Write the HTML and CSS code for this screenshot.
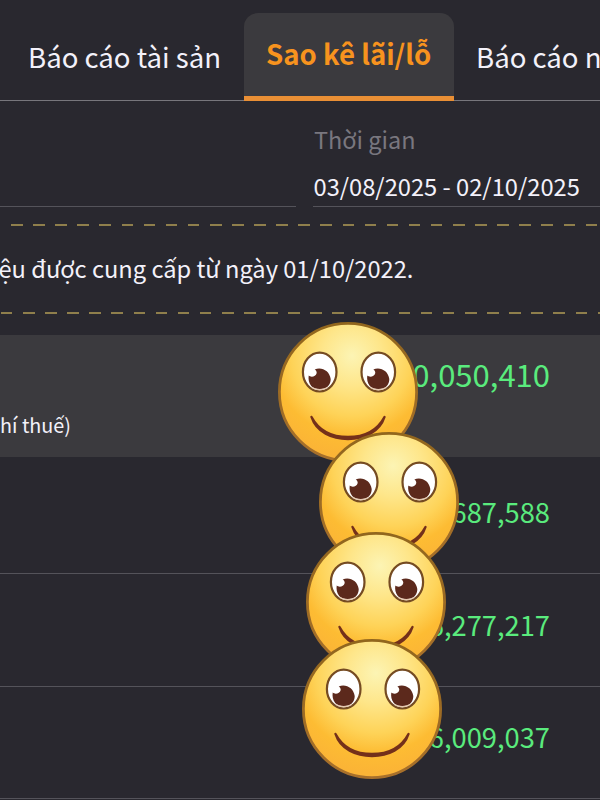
FILE: index.html
```html
<!DOCTYPE html>
<html lang="vi">
<head>
    <meta charset="utf-8">
    <title>Sao kê lãi/lỗ</title>
    <link rel="stylesheet" href="styles.css">
</head>
<body>
    <!-- Shared face drawing -->
    <svg class="defs" width="0" height="0">
        <defs>
            <radialGradient id="skin" gradientUnits="userSpaceOnUse" cx="74" cy="34" r="100">
                <stop offset="0" stop-color="#fcf4b4"/>
                <stop offset="0.3" stop-color="#fee68a"/>
                <stop offset="0.6" stop-color="#fed358"/>
                <stop offset="0.8" stop-color="#fdbc33"/>
                <stop offset="1" stop-color="#fbb436"/>
            </radialGradient>
            <linearGradient id="edge" x1="0" y1="0" x2="0" y2="1">
                <stop offset="0" stop-color="#91661d"/>
                <stop offset="1" stop-color="#a8702b"/>
            </linearGradient>
            <g id="eye">
                <ellipse rx="16.800" ry="19.400" fill="#fff" stroke="#754b22" stroke-width="2.200"/>
                <path d="M-11 3.500 C-9 5.500 -4 5 -3 1 C-3 -1 -4 -2 -5 -2.500 C2 -5.500 10 -1 11 7 C11 11 9 14.500 6 16 C2 18 -5 17.500 -8.500 14 C-11 11 -11.500 7 -11 3.500Z" fill="#5c291c"/>
                <path d="M-8 15.500 Q0 20 8 15.500" fill="none" stroke="#e5c9b0" stroke-width="1.300"/>
            </g>
            <symbol id="face" viewBox="0 0 140 140">
                <circle cx="70" cy="70" r="68.600" fill="url(#skin)" stroke="url(#edge)" stroke-width="2.800"/>
                <use href="#eye" x="41.700" y="50"/>
                <use href="#eye" x="100.300" y="50"/>
                <path d="M33.500 95 C41 109 54 115 70 115 C86 115 99 109 106.500 95 C101.500 110.500 86 117 70 117 C54 117 38.500 110.500 33.500 95Z" fill="#74301a" stroke="#74301a" stroke-width="2.400" stroke-linejoin="round"/>
            </symbol>
        </defs>
    </svg>

    <nav class="tabs">
        <div class="tab">Báo cáo tài sản</div>
        <div class="tab active">Sao kê lãi/lỗ</div>
        <div class="tab">Báo cáo n</div>
    </nav>

    <div class="filters">
        <div class="field"></div>
        <div class="field">
            <div class="label">Thời gian</div>
            <div class="date">03/08/2025 - 02/10/2025</div>
        </div>
    </div>

    <div class="notice">ệu được cung cấp từ ngày 01/10/2022.</div>

    <div class="report">
        <div class="total">
            <div class="amount big">0,050,410</div>
            <div class="caption">hí thuế)</div>
        </div>
        <div class="row"><div class="amount">687,588</div></div>
        <div class="row"><div class="amount">6,277,217</div></div>
        <div class="row"><div class="amount">6,009,037</div></div>

        <svg class="sticker first"><use href="#face"/></svg>
        <svg class="sticker second"><use href="#face"/></svg>
        <svg class="sticker third"><use href="#face"/></svg>
        <svg class="sticker fourth"><use href="#face"/></svg>
    </div>
</body>
</html>
```

FILE: styles.css
```css
:root {
    --bg: #29282f;
    --panel: #3b3a3e;
    --line: #54535a;
    --dash: #8f7f4c;
    --orange: #f7931e;
    --green: #5aeb7d;
}

* {
    box-sizing: border-box;
}

body {
    margin: 0;
    width: 600px;
    height: 800px;
    overflow: hidden;
    background: var(--bg);
    color: #f3f1fa;
    font-family: "Noto Sans CJK SC", "Noto Sans", sans-serif;
    white-space: nowrap;
}

.defs {
    display: block;
}

.tabs {
    display: flex;
    height: 101px;
    padding-top: 13px;
    border-bottom: 1px solid #77767c;
}

.tab {
    flex: none;
    height: 88px;
    padding-left: 28px;
    width: 244px;
    font-size: 27.6px;
    line-height: 86px;
}

.tab.active {
    width: 210px;
    padding: 0 0 0 22px;
    background: var(--panel);
    border-bottom: 5px solid #e98f35;
    border-radius: 14px 14px 0 0;
    color: var(--orange);
    font-size: 27.6px;
    font-weight: 700;
    line-height: 81px;
}

.tab:last-child {
    flex: 1;
    width: auto;
    min-width: 0;
    padding-left: 22px;
}

.filters {
    display: flex;
    gap: 17px;
    height: 106px;
}

.field {
    width: 296px;
    padding-top: 15px;
    border-bottom: 1px solid var(--line);
    flex: none;
}

.field:last-child {
    flex: 1;
}

.label {
    padding-left: 1px;
    font-size: 23.5px;
    line-height: 46px;
    color: #79777f;
}

.date {
    padding-left: 0.5px;
    font-size: 23.7px;
    line-height: 48px;
}

.notice {
    margin-top: 17px;
    height: 90px;
    font-size: 23.65px;
    line-height: 88px;
    text-indent: -1.5px;
    background:
        repeating-linear-gradient(90deg, var(--dash) 0 11.5px, transparent 11.5px 22.1px) -11px 0 / 663px 2px,
        repeating-linear-gradient(90deg, var(--dash) 0 11.5px, transparent 11.5px 22.1px) 1px 100% / 663px 2px;
    background-repeat: repeat-x;
}

.report {
    position: relative;
    margin-top: 21px;
}

.total {
    height: 122px;
    background: var(--panel);
    padding-top: 18px;
}

.amount {
    padding-right: 50px;
    text-align: right;
    font-size: 27.3px;
    line-height: 40px;
    color: var(--green);
}

.amount.big {
    font-size: 31px;
    line-height: 42px;
}

.caption {
    margin-top: 14px;
    font-size: 19.8px;
    line-height: 32px;
}

.row {
    height: 113px;
    padding-top: 30px;
    border-bottom: 1px solid var(--line);
}

.total + .row {
    height: 117px;
    padding-top: 34px;
}

.row:nth-child(4) {
    height: 112px;
    padding-top: 29px;
}

/* Stickers cover the leading digits */
.sticker {
    position: absolute;
    width: 140px;
    height: 140px;
}

.first {
    left: 278px;
    top: -13px;
}

.second {
    left: 319px;
    top: 97px;
}

.third {
    left: 306px;
    top: 197px;
}

.fourth {
    left: 302px;
    top: 304px;
}
```
